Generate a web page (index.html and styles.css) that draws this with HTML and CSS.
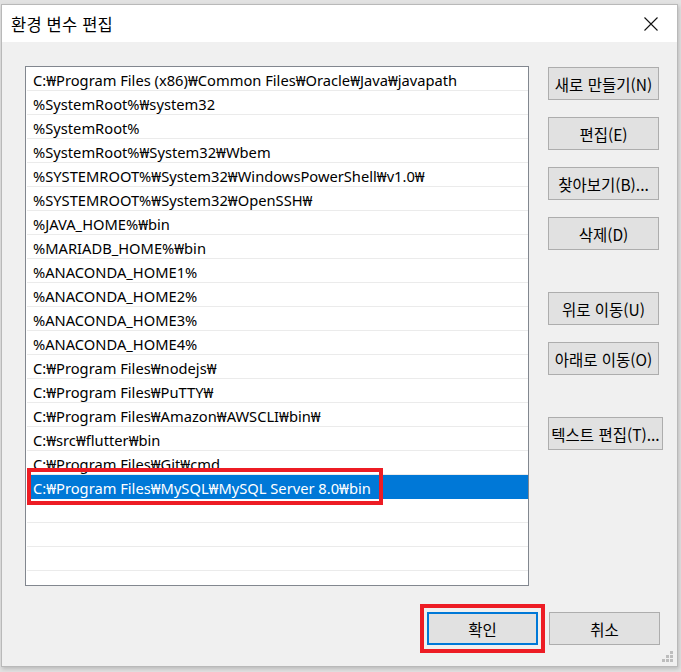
FILE: index.html
```html
<!DOCTYPE html>
<html lang="ko">
<head>
<meta charset="utf-8">
<title>환경 변수 편집</title>
<link rel="stylesheet" href="styles.css">
</head>
<body>
<div class="window">
  <div class="titlebar">
    <span class="title">환경 변수 편집</span>
    <svg class="close" width="14" height="14" viewBox="0 0 14 14"><path d="M0.5 0.5 L13.5 13.5 M13.5 0.5 L0.5 13.5" stroke="#111" stroke-width="1.1" fill="none"/></svg>
  </div>
  <div class="content">
    <div class="main">
      <div class="list">
        <div class="row">C:₩Program Files (x86)₩Common Files₩Oracle₩Java₩javapath</div>
        <div class="row">%SystemRoot%₩system32</div>
        <div class="row">%SystemRoot%</div>
        <div class="row">%SystemRoot%₩System32₩Wbem</div>
        <div class="row">%SYSTEMROOT%₩System32₩WindowsPowerShell₩v1.0₩</div>
        <div class="row">%SYSTEMROOT%₩System32₩OpenSSH₩</div>
        <div class="row">%JAVA_HOME%₩bin</div>
        <div class="row">%MARIADB_HOME%₩bin</div>
        <div class="row">%ANACONDA_HOME1%</div>
        <div class="row">%ANACONDA_HOME2%</div>
        <div class="row">%ANACONDA_HOME3%</div>
        <div class="row">%ANACONDA_HOME4%</div>
        <div class="row">C:₩Program Files₩nodejs₩</div>
        <div class="row">C:₩Program Files₩PuTTY₩</div>
        <div class="row">C:₩Program Files₩Amazon₩AWSCLI₩bin₩</div>
        <div class="row">C:₩src₩flutter₩bin</div>
        <div class="row">C:₩Program Files₩Git₩cmd</div>
        <div class="row selected">C:₩Program Files₩MySQL₩MySQL Server 8.0₩bin<span class="mark mark-row"></span></div>
        <div class="row"></div>
        <div class="row"></div>
        <div class="row"></div>
      </div>
      <div class="side">
        <div class="group">
          <button class="btn">새로 만들기(N)</button>
          <button class="btn">편집(E)</button>
          <button class="btn">찾아보기(B)...</button>
          <button class="btn">삭제(D)</button>
        </div>
        <div class="group">
          <button class="btn">위로 이동(U)</button>
          <button class="btn">아래로 이동(O)</button>
        </div>
        <div class="group">
          <button class="btn wide">텍스트 편집(T)...</button>
        </div>
      </div>
    </div>
    <div class="footer">
      <div class="ok-wrap">
        <button class="btn default">확인</button>
        <span class="mark mark-ok"></span>
      </div>
      <button class="btn">취소</button>
    </div>
    <svg class="grip" width="12" height="12" viewBox="0 0 12 12" fill="#bdbdbd">
      <rect x="8" y="0" width="3" height="3"/>
      <rect x="4" y="4" width="3" height="3"/><rect x="8" y="4" width="3" height="3"/>
      <rect x="0" y="8" width="3" height="3"/><rect x="4" y="8" width="3" height="3"/><rect x="8" y="8" width="3" height="3"/>
    </svg>
  </div>
</div>
</body>
</html>
```
FILE: styles.css
```css
* { box-sizing: border-box; }
html, body { margin: 0; padding: 0; }
body {
  width: 681px;
  height: 672px;
  background: #e2e2e2;
  padding: 4px 0 0 1px;
  font-family: "Noto Sans", "Noto Sans CJK KR", sans-serif;
  overflow: hidden;
}
.window {
  width: 677px;
  height: 663px;
  background: #f0f0f0;
  border: 1px solid #b9b9b9;
  box-shadow: 1px 2px 4px rgba(0,0,0,0.18);
  display: flex;
  flex-direction: column;
  position: relative;
}
.titlebar {
  height: 37px;
  background: #fff;
  display: flex;
  align-items: center;
  justify-content: space-between;
  padding: 0 19px 0 9px;
  flex: none;
}
.title {
  font-family: "Noto Sans CJK KR", sans-serif;
  font-size: 16.5px;
  color: #000;
  letter-spacing: 0.2px;
  padding-top: 1px;
}
.content {
  flex: 1;
  padding: 24px 0 0 23px;
  position: relative;
}
.main {
  display: flex;
  gap: 19px;
}
.list {
  width: 504px;
  height: 520px;
  border: 1px solid #82878f;
  background: #fff;
  overflow: hidden;
}
.row {
  height: 24px;
  margin-left: 1px;
  border-bottom: 1px solid #ebebeb;
  padding: 2px 0 0 6px;
  font-size: 14.7px;
  line-height: 23px;
  color: #000;
  white-space: nowrap;
  position: relative;
}
.row.selected {
  background: #0078d7;
  border-bottom-color: #0078d7;
  color: #fff;
}
.side {
  display: flex;
  flex-direction: column;
  padding-top: 1px;
  gap: 42px;
}
.group {
  display: flex;
  flex-direction: column;
  gap: 17px;
}
.btn {
  width: 111px;
  height: 33px;
  background: #e1e1e1;
  border: 1px solid #adadad;
  font-family: "Noto Sans CJK KR", sans-serif;
  font-size: 15.5px;
  color: #000;
  padding: 0;
  margin: 0;
  letter-spacing: 0;
  white-space: nowrap;
}
.btn.wide { width: 115px; }
.btn.default {
  border: 2px solid #0078d7;
}
.footer {
  display: flex;
  gap: 11px;
  padding-left: 402px;
  margin-top: 26px;
}
.ok-wrap { position: relative; display: flex; }
.mark {
  position: absolute;
  border: 4px solid #ed1c24;
  pointer-events: none;
}
.mark-row {
  left: 0;
  top: -7px;
  width: 356px;
  height: 37px;
}
.mark-ok {
  left: -7px;
  top: -8px;
  width: 125px;
  height: 49px;
}
.grip {
  position: absolute;
  right: 3px;
  bottom: 3px;
}
```
